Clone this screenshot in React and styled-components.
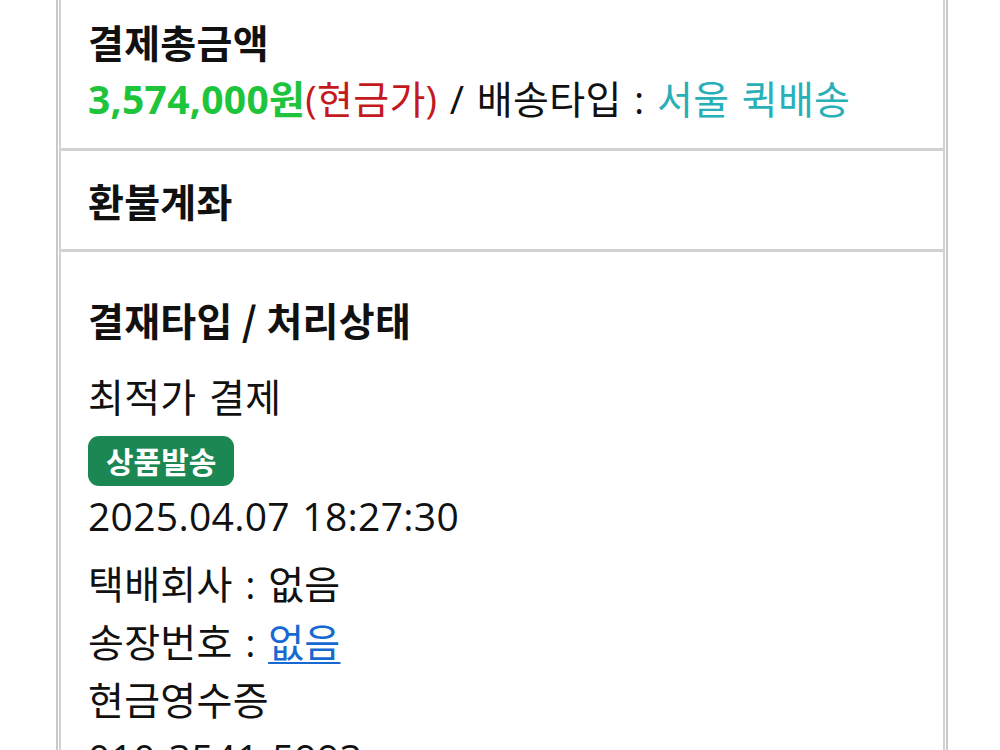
import React from "react";
import styled, { createGlobalStyle } from "styled-components";

const GlobalStyle = createGlobalStyle`
	html, body {
		margin: 0;
		background: #fff;
	}
	body {
		font-family: "Open Sans", "Noto Sans CJK KR", sans-serif;
		color: #111;
		overflow: hidden;
	}
`;

const Page = styled.div`
	padding-left: 56px;
	margin-top: -10px;
`;

const Table = styled.div`
	width: 886px;
	border: 2px solid #c9c9c9;
	padding: 0 1px;
`;

const Row = styled.section`
	border-left: 2px solid #d2d2d2;
	border-right: 2px solid #d2d2d2;
	border-top: ${(p) => (p.first ? "none" : "3px solid #d2d2d2")};
	padding: ${(p) => (p.tall ? "20px 27px 40px" : "20px 27px")};
	font-size: 39px;
	line-height: 58px;
	letter-spacing: 0.3px;
	word-spacing: 2px;
`;

const Title = styled.h3`
	margin: ${(p) => (p.spaced ? "18px 0 20px" : "0")};
	font-size: 39px;
	line-height: 58px;
	font-weight: 700;
	letter-spacing: 0.3px;
	word-spacing: 0;
	color: #111;
	font-family: "Noto Sans CJK KR", sans-serif;
`;

const Line = styled.div`
	font-weight: 400;
	margin-top: ${(p) => p.gap || 0}px;
`;

const Price = styled.span`
	color: #1ec43b;
	font-weight: 700;
`;

const Cash = styled.span`
	color: #c41a1e;
`;

const Delivery = styled.span`
	color: #27b0b8;
`;

const Badge = styled.span`
	display: inline-block;
	margin-top: 10px;
	padding: 0 18px;
	height: 50px;
	line-height: 48px;
	border-radius: 11px;
	background: #1b8752;
	color: #fff;
	font-size: 30px;
	font-weight: 700;
	letter-spacing: 0;
	font-family: "Noto Sans CJK KR", sans-serif;
`;

const Link = styled.a`
	color: #1569d1;
	text-decoration: underline;
	text-underline-offset: 5px;
	text-decoration-thickness: 2px;
`;

const App = () => {
	return (
		<>
			<GlobalStyle />
			<Page>
				<Table>
					<Row first>
						<Title>결제총금액</Title>
						<Line>
							<Price>3,574,000원</Price>
							<Cash>(현금가)</Cash> / 배송타입 : <Delivery>서울 퀵배송</Delivery>
						</Line>
					</Row>
					<Row>
						<Title>환불계좌</Title>
					</Row>
					<Row tall>
						<Title spaced>결재타입 / 처리상태</Title>
						<Line>최적가 결제</Line>
						<Badge>상품발송</Badge>
						<Line>2025.04.07 18:27:30</Line>
						<Line gap={10}>택배회사 : 없음</Line>
						<Line>
							송장번호 : <Link href="#">없음</Link>
						</Line>
						<Line>현금영수증</Line>
						<Line>010-3541-5993</Line>
					</Row>
				</Table>
			</Page>
		</>
	);
};

export default App;
